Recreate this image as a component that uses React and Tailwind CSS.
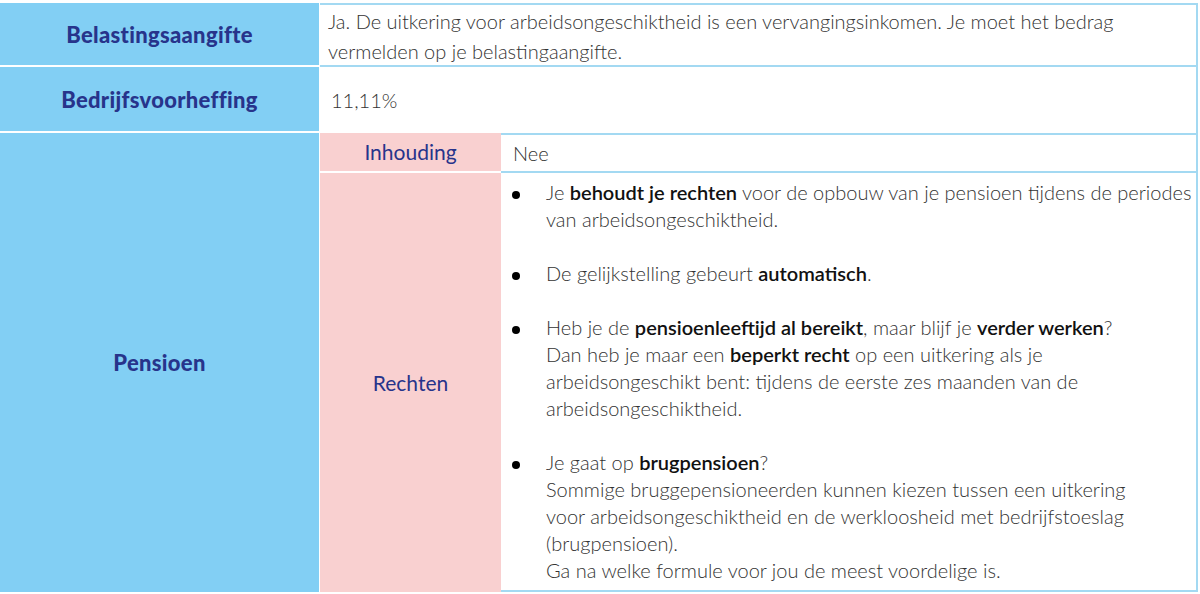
const font = { fontFamily: "Lato, 'Liberation Sans', sans-serif" };

const B = ({ children }) => <span className="font-semibold text-[#111]">{children}</span>;

const items = [
  <>Je <B>behoudt je rechten</B> voor de opbouw van je pensioen tijdens de periodes<br />van arbeidsongeschiktheid.</>,
  <>De gelijkstelling gebeurt <B>automatisch</B>.</>,
  <>Heb je de <B>pensioenleeftijd al bereikt</B>, maar blijf je <B>verder werken</B>?<br />Dan heb je maar een <B>beperkt recht</B> op een uitkering als je<br />arbeidsongeschikt bent: tijdens de eerste zes maanden van de<br />arbeidsongeschiktheid.</>,
  <>Je gaat op <B>brugpensioen</B>?<br />Sommige bruggepensioneerden kunnen kiezen tussen een uitkering<br />voor arbeidsongeschiktheid en de werkloosheid met bedrijfstoeslag<br />(brugpensioen).<br />Ga na welke formule voor jou de meest voordelige is.</>,
];

const head = "w-[320px] bg-[#82cff4] border-r border-white flex items-center justify-center font-black text-[22px] tracking-[0.3px] text-[#27348b]";

export default function App() {
  return (
    <div className="bg-white w-[1200px] h-[594px] pt-[3px]" style={font}>
      <div className="w-[1198px] flex flex-col text-[20px] text-[#333] font-light">
        <div className="flex h-[64px]">
          <div className={`${head} border-b-2`}>Belastingsaangifte</div>
          <div className="flex-1 border-t-2 border-r-2 border-b-2 border-[#a3d9f2] pl-[8px] pt-[1px] leading-[30px]">
            Ja. De uitkering voor arbeidsongeschiktheid is een vervangingsinkomen. Je moet het bedrag<br />vermelden op je belastingaangifte.
          </div>
        </div>
        <div className="flex h-[66px]">
          <div className={`${head} border-b-2`}>Bedrijfsvoorheffing</div>
          <div className="flex-1 border-r-2 border-[#a3d9f2] pl-[11px] flex items-center">
            11,11%
          </div>
        </div>
        <div className="flex h-[459px]">
          <div className={head}>Pensioen</div>
          <div className="flex-1 flex flex-col">
            <div className="flex h-[40px]">
              <div className="w-[181px] bg-[#f9d0d0] border-b-2 border-white flex items-center justify-center text-[#27348b] text-[21px] font-normal">
                Inhouding
              </div>
              <div className="flex-1 border-t-2 border-r-2 border-b-2 border-[#a3d9f2] pl-[12px] flex items-center">
                Nee
              </div>
            </div>
            <div className="flex flex-1">
              <div className="w-[181px] bg-[#f9d0d0] flex items-center justify-center text-[#27348b] text-[21px] font-normal">
                Rechten
              </div>
              <div className="flex-1 border-r-2 border-b-2 border-[#a3d9f2] pt-[6px] leading-[27px]">
                {items.map((it, i) => (
                  <div key={i} className={`flex ${i > 0 ? "mt-[27px]" : ""}`}>
                    <div className="w-[45px] pl-[11px] shrink-0">
                      <span className="inline-block w-[8px] h-[8px] rounded-full bg-black align-middle"></span>
                    </div>
                    <div>{it}</div>
                  </div>
                ))}
              </div>
            </div>
          </div>
        </div>
      </div>
    </div>
  );
}
